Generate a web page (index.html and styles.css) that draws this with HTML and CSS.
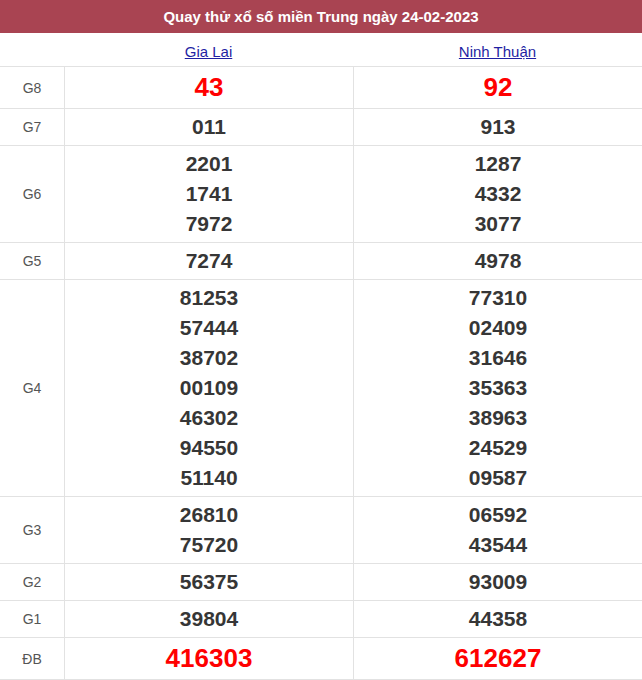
FILE: index.html
```html
<!DOCTYPE html>
<html lang="vi">
<head>
<meta charset="utf-8">
<title>Quay thử xổ số miền Trung</title>
<link rel="stylesheet" href="styles.css">
</head>
<body>
<div class="title">Quay thử xổ số miền Trung ngày 24-02-2023</div>
<table class="kq">
  <colgroup><col class="c-label"><col><col></colgroup>
  <thead>
    <tr><th></th><th><a href="#">Gia Lai</a></th><th><a href="#">Ninh Thuận</a></th></tr>
  </thead>
  <tbody>
    <tr><td class="lbl">G8</td><td><span class="n big">43</span></td><td><span class="n big">92</span></td></tr>
    <tr><td class="lbl">G7</td><td><span class="n">011</span></td><td><span class="n">913</span></td></tr>
    <tr><td class="lbl">G6</td><td><span class="n">2201</span><span class="n">1741</span><span class="n">7972</span></td><td><span class="n">1287</span><span class="n">4332</span><span class="n">3077</span></td></tr>
    <tr><td class="lbl">G5</td><td><span class="n">7274</span></td><td><span class="n">4978</span></td></tr>
    <tr><td class="lbl">G4</td>
      <td><span class="n">81253</span><span class="n">57444</span><span class="n">38702</span><span class="n">00109</span><span class="n">46302</span><span class="n">94550</span><span class="n">51140</span></td>
      <td><span class="n">77310</span><span class="n">02409</span><span class="n">31646</span><span class="n">35363</span><span class="n">38963</span><span class="n">24529</span><span class="n">09587</span></td></tr>
    <tr><td class="lbl">G3</td><td><span class="n">26810</span><span class="n">75720</span></td><td><span class="n">06592</span><span class="n">43544</span></td></tr>
    <tr><td class="lbl">G2</td><td><span class="n">56375</span></td><td><span class="n">93009</span></td></tr>
    <tr><td class="lbl">G1</td><td><span class="n">39804</span></td><td><span class="n">44358</span></td></tr>
    <tr class="last"><td class="lbl">ĐB</td><td><span class="n big">416303</span></td><td><span class="n big">612627</span></td></tr>
  </tbody>
</table>
</body>
</html>
```

FILE: styles.css
```css
html, body {
  margin: 0;
  padding: 0;
  background: #fff;
  font-family: "Liberation Sans", Arial, sans-serif;
}
.title {
  height: 33px;
  line-height: 33px;
  background: #a94452;
  color: #fff;
  font-weight: bold;
  font-size: 15px;
  text-align: center;
}
.kq {
  width: 642px;
  table-layout: fixed;
  border-collapse: separate;
  border-spacing: 0;
}
.c-label { width: 64px; }
.kq th {
  height: 30px;
  padding: 3px 0 0;
  font-weight: normal;
  font-size: 15px;
  text-align: center;
  vertical-align: middle;
}
.kq th a {
  color: #1f1fa3;
  text-decoration: underline;
}
.kq td {
  border-top: 1px solid #e2e2e2;
  padding: 3px 0;
  text-align: center;
  vertical-align: middle;
}
.kq td + td { border-left: 1px solid #e2e2e2; }
.kq tr.last td { border-bottom: 1px solid #e2e2e2; }
.lbl {
  font-size: 14px;
  color: #555;
}
.n {
  display: block;
  line-height: 30px;
  font-size: 21px;
  font-weight: bold;
  color: #363636;
}
.n.big {
  line-height: 35px;
  font-size: 26px;
  color: #f00;
}
```
